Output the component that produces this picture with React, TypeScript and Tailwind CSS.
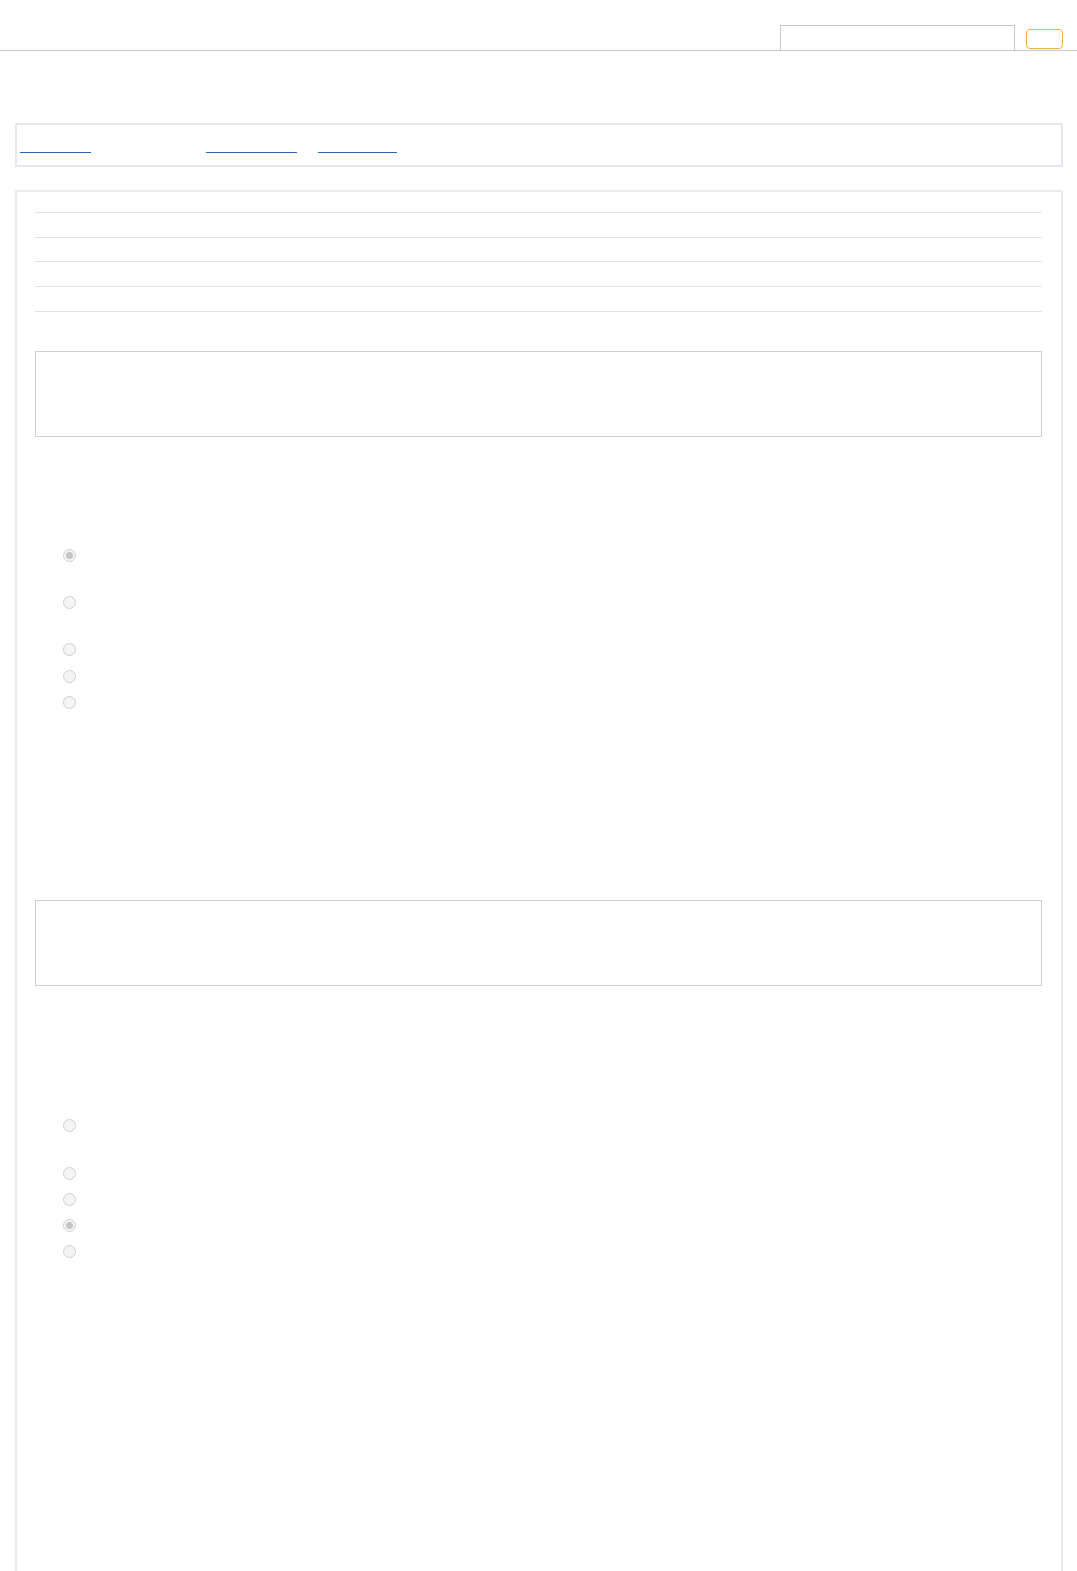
import React from 'react';

const Radio: React.FC<{ checked?: boolean; className?: string }> = ({ checked, className }) => (
  <div className={`flex items-center ${className ?? ''}`}>
    <span className="ml-[28px] flex h-[13px] w-[13px] items-center justify-center rounded-full border border-[#cfcfcf] bg-[#f4f4f4]">
      {checked && <span className="h-[7px] w-[7px] rounded-full bg-[#c4c4c4]" />}
    </span>
    <span className="ml-2 text-sm text-white">&nbsp;</span>
  </div>
);

export default function App() {
  return (
    <div className="min-h-screen bg-white font-['Liberation_Sans',Arial,sans-serif]">
      {/* Header */}
      <div className="flex h-[51px] items-end justify-end border-b border-[#c8c8c8] pr-[14px]">
        <input
          type="text"
          aria-label="Search"
          className="h-[25px] w-[235px] border border-b-0 border-[#c8c8c8] bg-white outline-none"
        />
        <button className="mb-[1px] ml-[11px] h-[20px] w-[37px] rounded-[4px] border border-[#f0ad4e] bg-white" />
      </div>

      {/* Nav */}
      <div className="ml-[15px] mr-[14px] mt-[72px] flex h-[44px] items-start border-2 border-[#e5e9ee] pl-[3px] pt-[26px]">
        <a href="#" className="block h-[2px] w-[71px] border-b border-[#2a68b1]" />
        <a href="#" className="ml-[115px] block h-[2px] w-[91px] border-b border-[#2a68b1]" />
        <a href="#" className="ml-[21px] block h-[2px] w-[79px] border-b border-[#2a68b1]" />
      </div>

      {/* Main panel */}
      <div className="ml-[15px] mr-[14px] mt-[23px] border-2 border-b-0 border-[#ececec] pl-[18px] pr-[19px] pb-[420px]">
        <div className="h-[21px] border-b border-[#e2e2e2]" />
        <div className="h-[25px] border-b border-[#e2e2e2]" />
        <div className="h-[24px] border-b border-[#e2e2e2]" />
        <div className="h-[25px] border-b border-[#e2e2e2]" />
        <div className="h-[25px] border-b border-[#e2e2e2]" />

        <div className="mt-[39px] h-[86px] border border-[#cdd1d6]" />

        <Radio checked className="mt-[112px] h-[13px]" />
        <Radio className="mt-[34px] h-[13px]" />
        <Radio className="mt-[34px] h-[13px]" />
        <Radio className="mt-[14px] h-[13px]" />
        <Radio className="mt-[13px] h-[13px]" />

        <div className="mt-[191px] h-[86px] border border-[#cdd1d6]" />

        <Radio className="mt-[133px] h-[13px]" />
        <Radio className="mt-[35px] h-[13px]" />
        <Radio className="mt-[13px] h-[13px]" />
        <Radio checked className="mt-[13px] h-[13px]" />
        <Radio className="mt-[13px] h-[13px]" />
      </div>
    </div>
  );
}
